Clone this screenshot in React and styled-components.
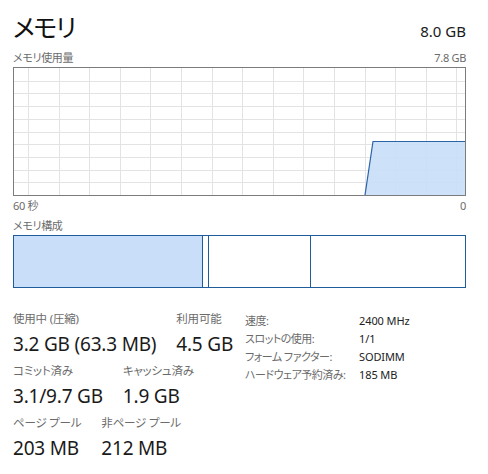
import React from "react";
import styled, { createGlobalStyle } from "styled-components";

const Global = createGlobalStyle`
  html, body { margin: 0; padding: 0; background: #ffffff; }
  body {
    font-family: "Segoe UI", "Noto Sans", "Noto Sans CJK JP", sans-serif;
    font-feature-settings: "palt";
    color: #1a1a1a;
  }
`;

const Page = styled.div`
  width: 488px;
  height: 474px;
  box-sizing: border-box;
  padding: 9px 22px 0 13px;
  display: flex;
  flex-direction: column;
`;

const Header = styled.div`
  display: flex;
  justify-content: space-between;
  align-items: baseline;
  height: 40px;
`;

const Title = styled.div`
  font-size: 25px;
  letter-spacing: -1.4px;
  line-height: 36px;
  font-weight: 400;
  color: #111;
`;

const Total = styled.div`
  font-size: 15px;
  line-height: 20px;
  color: #1a1a1a;
`;

const LabelRow = styled.div`
  display: flex;
  justify-content: space-between;
  align-items: center;
  height: ${(p) => p.$h || 18}px;
`;

const Small = styled.span`
  font-size: 11px;
  letter-spacing: -0.3px;
  line-height: 16px;
  color: #6b6b6b;
`;

const GraphBox = styled.div`
  height: 127px;
  border: 1px solid #7c7c7c;
  svg { display: block; }
`;

const CompBar = styled.div`
  display: flex;
  height: 51px;
  border: 1px solid #1f5c9c;
`;

const Segment = styled.div`
  flex: ${(p) => (p.$w ? `0 0 ${p.$w}px` : "1 1 auto")};
  box-sizing: border-box;
  background: ${(p) => (p.$filled ? "#c9dff9" : "#ffffff")};
  border-right: ${(p) => (p.$last ? "none" : "1px solid #1f5c9c")};
`;

const Stats = styled.div`
  display: flex;
  margin-top: 23px;
`;

const LeftStats = styled.div`
  width: 219px;
  display: flex;
  flex-direction: column;
  gap: 5px;
`;

const StatRow = styled.div`
  display: flex;
  gap: 20px;
`;

const Stat = styled.div`
  display: flex;
  flex-direction: column;
`;

const StatLabel = styled.div`
  font-size: 11.5px;
  letter-spacing: -0.2px;
  line-height: 16px;
  color: #6b6b6b;
  white-space: nowrap;
`;

const StatValue = styled.div`
  font-size: 19px;
  letter-spacing: -0.2px;
  line-height: 27px;
  margin-top: 4px;
  color: #1a1a1a;
  white-space: nowrap;
`;

const InfoTable = styled.div`
  margin-left: 13px;
  display: grid;
  grid-template-columns: 114px auto;
  grid-auto-rows: 18px;
  align-items: center;
`;

const InfoLabel = styled.div`
  font-size: 11px;
  letter-spacing: -0.5px;
  color: #6b6b6b;
  white-space: nowrap;
`;

const InfoValue = styled.div`
  font-size: 11px;
  letter-spacing: -0.1px;
  color: #222;
  white-space: nowrap;
`;

function Graph() {
  const w = 451;
  const h = 127;
  const vlines = [];
  for (let k = 0; k < 15; k++) vlines.push(14 + k * 30.6);
  const hlines = [];
  for (let k = 1; k < 10; k++) hlines.push(k * 12.7);
  return (
    <svg width={w} height={h} viewBox={`0 0 ${w} ${h}`}>
      {vlines.map((x) => (
        <line key={"v" + x} x1={Math.round(x) + 0.5} x2={Math.round(x) + 0.5} y1={0} y2={h} stroke="#e3e3e3" strokeWidth="1" />
      ))}
      {hlines.map((y) => (
        <line key={"h" + y} x1={0} x2={w} y1={Math.round(y) + 0.5} y2={Math.round(y) + 0.5} stroke="#e3e3e3" strokeWidth="1" />
      ))}
      <polygon points={`351,${h} 359,73.5 ${w},73.5 ${w},${h}`} fill="#c9dff9" fillOpacity="0.92" />
      <polyline points={`351,${h} 359,73.5 ${w},73.5`} fill="none" stroke="#2b63a6" strokeWidth="1.2" />
    </svg>
  );
}

const stats = [
  [
    { label: "使用中 (圧縮)", value: "3.2 GB (63.3 MB)" },
    { label: "利用可能", value: "4.5 GB" },
  ],
  [
    { label: "コミット済み", value: "3.1/9.7 GB" },
    { label: "キャッシュ済み", value: "1.9 GB" },
  ],
  [
    { label: "ページ プール", value: "203 MB" },
    { label: "非ページ プール", value: "212 MB" },
  ],
];

const info = [
  ["速度:", "2400 MHz"],
  ["スロットの使用:", "1/1"],
  ["フォーム ファクター:", "SODIMM"],
  ["ハードウェア予約済み:", "185 MB"],
];

export default function App() {
  return (
    <>
      <Global />
      <Page>
        <Header>
          <Title>メモリ</Title>
          <Total>8.0 GB</Total>
        </Header>
        <LabelRow $h={18}>
          <Small>メモリ使用量</Small>
          <Small>7.8 GB</Small>
        </LabelRow>
        <GraphBox>
          <Graph />
        </GraphBox>
        <LabelRow $h={20}>
          <Small>60 秒</Small>
          <Small>0</Small>
        </LabelRow>
        <LabelRow $h={19}>
          <Small>メモリ構成</Small>
        </LabelRow>
        <CompBar>
          <Segment $filled $w={189} />
          <Segment $w={6} />
          <Segment $w={102} />
          <Segment $last />
        </CompBar>
        <Stats>
          <LeftStats>
            {stats.map((row, i) => (
              <StatRow key={i}>
                {row.map((s) => (
                  <Stat key={s.label}>
                    <StatLabel>{s.label}</StatLabel>
                    <StatValue>{s.value}</StatValue>
                  </Stat>
                ))}
              </StatRow>
            ))}
          </LeftStats>
          <InfoTable>
            {info.map(([l, v]) => (
              <React.Fragment key={l}>
                <InfoLabel>{l}</InfoLabel>
                <InfoValue>{v}</InfoValue>
              </React.Fragment>
            ))}
          </InfoTable>
        </Stats>
      </Page>
    </>
  );
}
